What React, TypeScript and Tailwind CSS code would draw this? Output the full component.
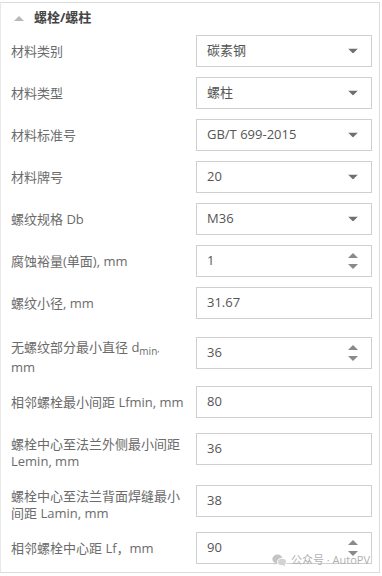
import type { ReactNode } from "react";

type Kind = "select" | "number" | "text";

interface Row {
  label: ReactNode;
  value: string;
  kind: Kind;
  lines?: 1 | 2;
}

const rows: Row[] = [
  { label: "材料类别", value: "碳素钢", kind: "select" },
  { label: "材料类型", value: "螺柱", kind: "select" },
  { label: "材料标准号", value: "GB/T 699-2015", kind: "select" },
  { label: "材料牌号", value: "20", kind: "select" },
  { label: "螺纹规格 Db", value: "M36", kind: "select" },
  { label: "腐蚀裕量(单面), mm", value: "1", kind: "number" },
  { label: "螺纹小径, mm", value: "31.67", kind: "text" },
  {
    label: (
      <>
        <span className="block leading-[21px]">
          无螺纹部分最小直径 d
          <span className="relative top-[3px] text-[10px]">min</span>
          <span className="text-[9px]">,</span>
        </span>
        <span className="block">mm</span>
      </>
    ),
    value: "36",
    kind: "number",
    lines: 2,
  },
  { label: "相邻螺栓最小间距 Lfmin, mm", value: "80", kind: "text" },
  { label: "螺栓中心至法兰外侧最小间距 Lemin, mm", value: "36", kind: "text", lines: 2 },
  { label: "螺栓中心至法兰背面焊缝最小间距 Lamin, mm", value: "38", kind: "text", lines: 2 },
  { label: "相邻螺栓中心距 Lf，mm", value: "90", kind: "number" },
];

function Caret() {
  return (
    <svg width="10" height="5" viewBox="0 0 10 5" className="absolute right-[13px] top-1/2 -translate-y-1/2">
      <path d="M0 0h10L5 5z" fill="#6f6f6f" />
    </svg>
  );
}

function Spinner() {
  return (
    <div className="absolute right-[13px] top-1/2 -translate-y-1/2 flex flex-col gap-[6px]">
      <svg width="10" height="5" viewBox="0 0 10 5">
        <path d="M5 0l5 5H0z" fill="#8a8a8a" />
      </svg>
      <svg width="10" height="5" viewBox="0 0 10 5">
        <path d="M0 0h10L5 5z" fill="#8a8a8a" />
      </svg>
    </div>
  );
}

function Field({ row }: { row: Row }) {
  const two = row.lines === 2;
  return (
    <div className="flex items-center">
      <div className={`w-[185px] shrink-0 pr-[9px] text-[13px] text-[#6b6b6b] ${two ? "pt-[8px] leading-[17px]" : "leading-[17px]"}`}>
        {row.label}
      </div>
      <div className="relative h-[32px] w-[176px] shrink-0 border border-[#cfcfcf] bg-white flex items-center pl-[10px] text-[13px] text-[#555]">
        {row.value}
        {row.kind === "select" && <Caret />}
        {row.kind === "number" && <Spinner />}
      </div>
    </div>
  );
}

export default function App() {
  return (
    <div className="relative h-[576px] w-[382px] bg-white pt-[2px]" style={{ fontFamily: '"Open Sans", "Noto Sans CJK SC", sans-serif' }}>
      <div className="h-[571px] w-[380px] border border-[#dcdcdc] border-l-[#e8e8e8]">
        {/* Header */}
        <div className="flex h-[30px] items-center pl-[13px]">
          <svg width="10" height="5" viewBox="0 0 10 5">
            <path d="M5 0l5 5H0z" fill="#b8b8b8" />
          </svg>
          <span className="ml-[10px] text-[13px] font-bold text-[#444]">螺栓/螺柱</span>
        </div>

        {/* Rows */}
        <div className="flex flex-col gap-[10px] pl-[10px] pt-[2px]">
          {rows.map((r, i) => (
            <Field key={i} row={r} />
          ))}
        </div>
      </div>

      {/* Watermark */}
      <div className="absolute left-[272px] top-[552px] flex items-center gap-[4px] text-[11px] text-[#b0b0b0]">
        <svg width="15" height="13" viewBox="0 0 15 13">
          <ellipse cx="5.5" cy="5" rx="5.2" ry="4.4" fill="#c4c4c4" />
          <path d="M2.5 8.5l-0.8 2.2 2.6-1.4z" fill="#c4c4c4" />
          <ellipse cx="10" cy="8" rx="4.4" ry="3.7" fill="#d2d2d2" stroke="#fff" strokeWidth="1" />
          <path d="M12.4 10.8l0.8 1.8-2.3-1.1z" fill="#d2d2d2" />
        </svg>
        <span>公众号 · AutoPV</span>
      </div>
    </div>
  );
}
